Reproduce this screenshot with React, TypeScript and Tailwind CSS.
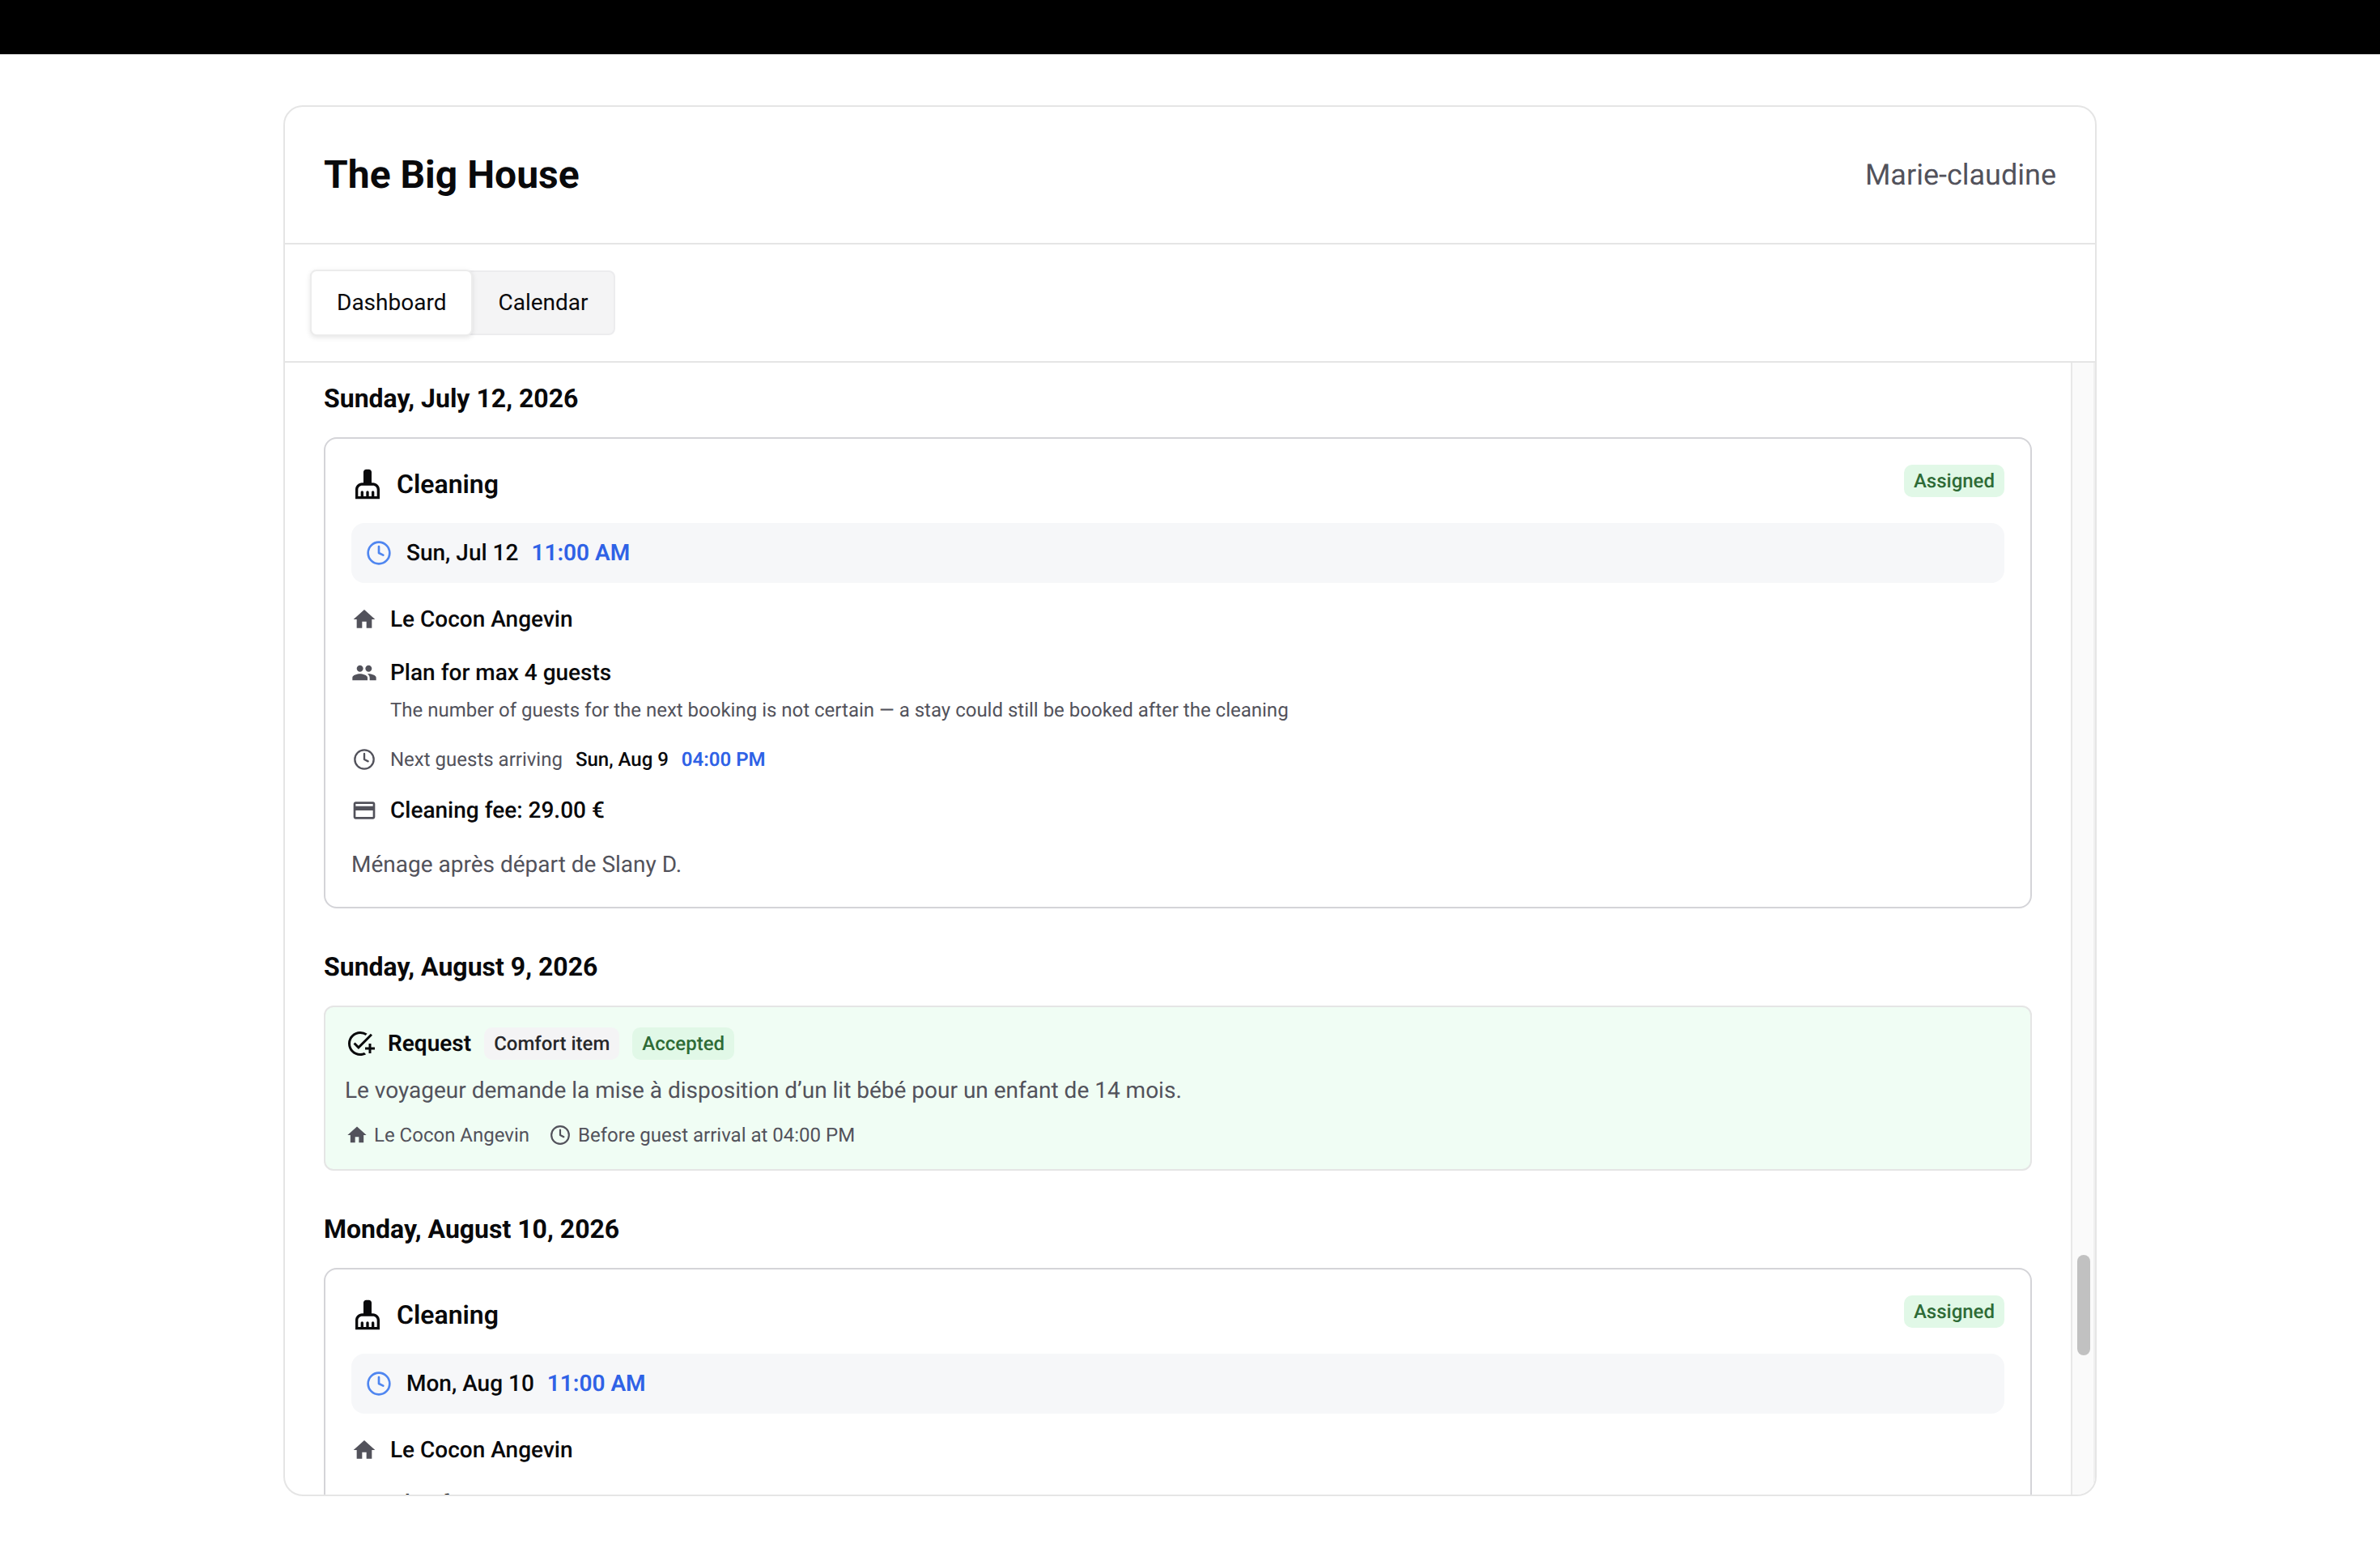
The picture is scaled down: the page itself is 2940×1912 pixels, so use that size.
import { Clock } from "lucide-react";
import { MdAddTask, MdCleaningServices, MdHome, MdOutlineCreditCard, MdPeople } from "react-icons/md";

function InfoRow({ icon, children, className = "" }: { icon: React.ReactNode; children: React.ReactNode; className?: string }) {
  return (
    <div className={"flex items-center gap-[16px] " + className}>
      <span className="flex w-[32px] shrink-0 justify-center text-[#52525b]">{icon}</span>
      {children}
    </div>
  );
}

function CleaningCard({ date, details = false }: { date: string; details?: boolean }) {
  return (
    <div className="rounded-[16px] border-2 border-[#d4d4d8] bg-white p-[32px]">
      <div className="flex h-[48px] items-start justify-between">
        <div className="flex h-[48px] items-center gap-[16px]">
          <MdCleaningServices className="size-[40px] text-[#09090b]" />
          <span className="text-[32px] font-semibold leading-[40px] text-[#09090b]">Cleaning</span>
        </div>
        <span className="flex h-[40px] items-center rounded-[10px] bg-[#e1f8e7] px-[12px] text-[24px] font-medium text-[#2e6b36]">Assigned</span>
      </div>
      <div className="mt-[24px] flex h-[74px] items-center rounded-[16px] bg-[#f6f7f9] px-[18px]">
        <Clock className="size-[32px] text-[#4f86f0]" strokeWidth={2} />
        <span className="ml-[18px] text-[28px] font-medium text-[#09090b]">{date}</span>
        <span className="ml-[16px] text-[28px] font-semibold text-[#2f62e6]">11:00 AM</span>
      </div>
      <InfoRow icon={<MdHome className="size-[32px]" />} className="mt-[27px] h-[36px]">
        <span className="text-[28px] font-medium text-[#09090b]">Le Cocon Angevin</span>
      </InfoRow>
      <InfoRow icon={<MdPeople className="size-[32px]" />} className="mt-[30px] h-[36px]">
        <span className="text-[28px] font-medium text-[#09090b]">Plan for max 4 guests</span>
      </InfoRow>
      {details && (
        <>
          <p className="ml-[48px] mt-[10px] text-[24px] leading-[36px] text-[#52525b]">
            The number of guests for the next booking is not certain — a stay could still be booked after the cleaning
          </p>
          <InfoRow icon={<Clock className="size-[28px]" strokeWidth={2} />} className="mt-[25px] h-[36px] text-[24px]">
            <span className="text-[#52525b]">Next guests arriving</span>
            <span className="font-medium text-[#09090b]">Sun, Aug 9</span>
            <span className="font-semibold text-[#2f62e6]">04:00 PM</span>
          </InfoRow>
          <InfoRow icon={<MdOutlineCreditCard className="size-[32px]" />} className="mt-[27px] h-[36px]">
            <span className="text-[28px] font-medium text-[#09090b]">Cleaning fee: 29.00 €</span>
          </InfoRow>
          <p className="mt-[29px] text-[28px] leading-[40px] text-[#52525b]">Ménage après départ de Slany D.</p>
        </>
      )}
    </div>
  );
}

function DayHeading({ children }: { children: React.ReactNode }) {
  return <h2 className="text-[32px] font-bold leading-[44px] text-[#09090b]">{children}</h2>;
}

export default function App() {
  return (
    <div className="h-[1912px] overflow-hidden bg-white font-['Roboto',sans-serif] [text-rendering:geometricPrecision]">
      <div className="h-[67px] bg-black" />
      <div className="mx-auto mt-[63px] flex h-[1718px] w-[2240px] flex-col overflow-hidden rounded-[24px] border-2 border-[#e5e5e5]">
        <header className="flex h-[170px] shrink-0 items-center justify-between border-b-2 border-[#e5e5e5] px-[48px]">
          <h1 className="text-[48px] font-bold text-[#09090b]">The Big House</h1>
          <span className="text-[36px] text-[#52525b]">Marie-claudine</span>
        </header>
        <nav className="flex h-[146px] shrink-0 items-center border-b-2 border-[#e5e5e5] px-[31px]">
          <div className="flex h-[80px] items-stretch rounded-[8px] border-2 border-[#ececee] bg-[#f4f4f5]">
            <button className="relative my-[-3px] ml-[-2px] rounded-[8px] border-2 border-[#ececec] bg-white px-[31px] text-[28px] text-[#09090b] shadow-[0_2px_6px_rgba(0,0,0,0.1)]">
              Dashboard
            </button>
            <button className="px-[31px] text-[28px] text-[#09090b]">Calendar</button>
          </div>
        </nav>
        <div className="flex min-h-0 flex-1">
          <main className="min-w-0 flex-1 overflow-hidden px-[48px] pt-[22px]">
            <DayHeading>Sunday, July 12, 2026</DayHeading>
            <div className="mt-[26px]">
              <CleaningCard date="Sun, Jul 12" details />
            </div>
            <div className="mt-[50px]">
              <DayHeading>Sunday, August 9, 2026</DayHeading>
            </div>
            <div className="mt-[26px] rounded-[12px] border-2 border-[#e5e5e5] bg-[#f0fdf4] px-[24px] pb-[24px] pt-[25px]">
              <div className="flex h-[40px] items-center">
                <MdAddTask className="ml-[1px] size-[36px] text-[#09090b]" />
                <span className="ml-[16px] text-[28px] font-semibold text-[#09090b]">Request</span>
                <span className="ml-[16px] flex h-[40px] items-center rounded-[10px] bg-[#f4f4f5] px-[12px] text-[24px] font-medium text-[#27272a]">Comfort item</span>
                <span className="ml-[16px] flex h-[40px] items-center rounded-[10px] bg-[#e1f8e7] px-[12px] text-[24px] font-medium text-[#2e6b36]">Accepted</span>
              </div>
              <p className="mt-[18px] text-[28px] leading-[40px] text-[#52525b]">
                Le voyageur demande la mise à disposition d’un lit bébé pour un enfant de 14 mois.
              </p>
              <div className="mt-[17px] flex h-[36px] items-center text-[24px] text-[#52525b]">
                <MdHome className="ml-[1px] size-[28px]" />
                <span className="ml-[7px]">Le Cocon Angevin</span>
                <Clock className="ml-[25px] size-[26px]" strokeWidth={2} />
                <span className="ml-[9px]">Before guest arrival at 04:00 PM</span>
              </div>
            </div>
            <div className="mt-[50px]">
              <DayHeading>Monday, August 10, 2026</DayHeading>
            </div>
            <div className="mt-[26px]">
              <CleaningCard date="Mon, Aug 10" />
            </div>
          </main>
          <div className="w-[30px] shrink-0 border-l-2 border-r-2 border-l-[#e8e8e8] border-r-[#f0f0f0] bg-[#fafafa]">
            <div className="ml-[6px] mt-[1102px] h-[124px] w-[16px] rounded-full bg-[#c1c1c1]" />
          </div>
        </div>
      </div>
    </div>
  );
}
